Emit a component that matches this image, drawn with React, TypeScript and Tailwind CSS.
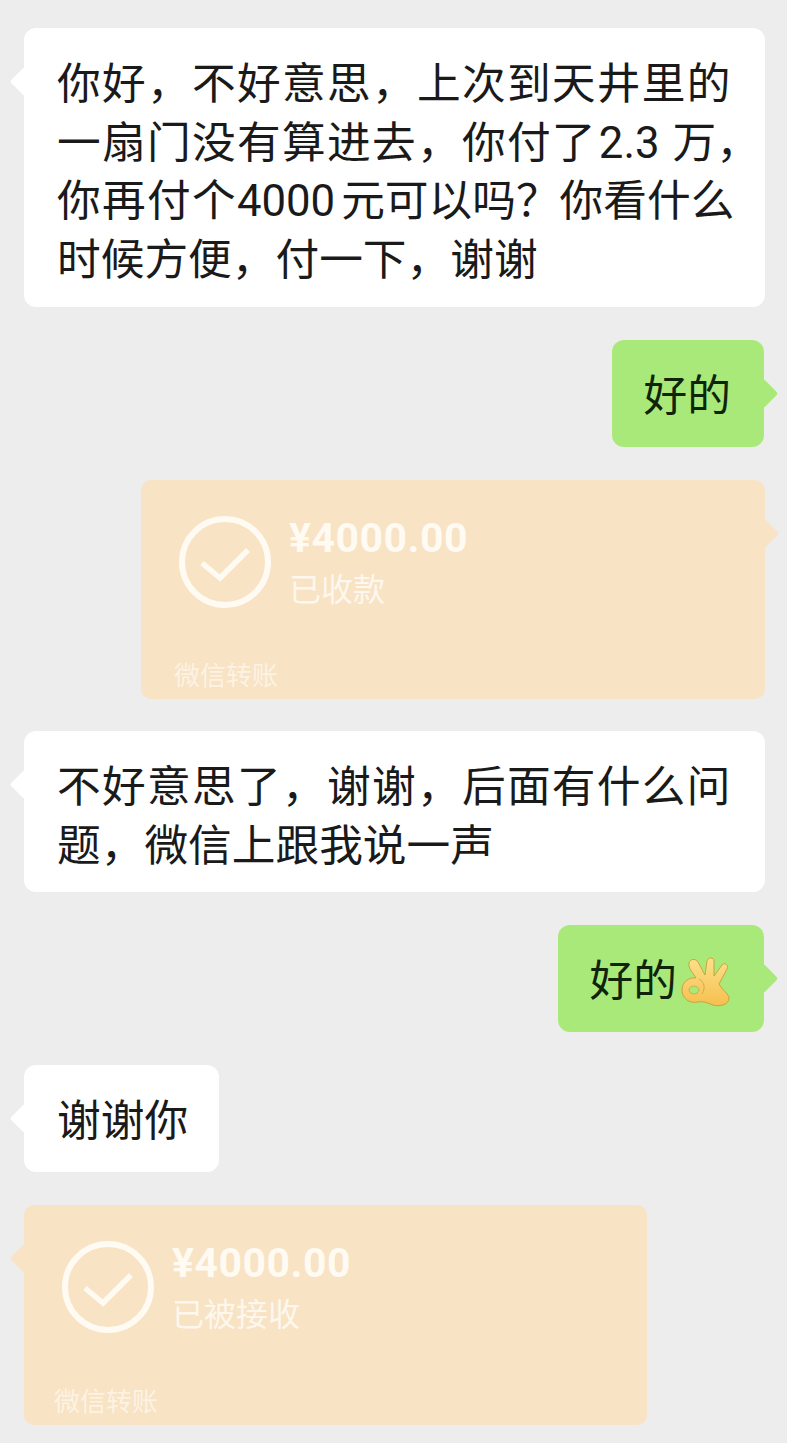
const FONT = "font-['Roboto','Noto_Sans_CJK_SC',sans-serif]";

function Incoming({ children, full }: { children: React.ReactNode; full?: boolean }) {
  return (
    <div
      className={`relative min-h-[107px] rounded-[12px] bg-white pb-[17px] pl-[33px] pr-[31px] pt-[27px] text-[43.7px] leading-[58.7px] text-[#1a1a1a] whitespace-pre ${
        full ? "self-stretch" : "w-fit self-start"
      }`}
    >
      <span className="absolute left-[-10px] top-[43px] h-[21px] w-[21px] rotate-45 rounded-[3px] bg-white" />
      {children}
    </div>
  );
}

function Line({ children, wide }: { children: React.ReactNode; wide?: boolean }) {
  return <div className={`relative ${wide ? "tracking-[1.3px]" : ""}`}>{children}</div>;
}

function Outgoing({ children }: { children: React.ReactNode }) {
  return (
    <div className="relative mr-[1px] flex h-[107px] items-center self-end rounded-[12px] bg-[#a9e97a] pl-[32px] pr-[33px] pt-[7px] text-[43.7px] text-[#10240a]">
      <span className="absolute right-[-10px] top-[43px] h-[21px] w-[21px] rotate-45 rounded-[3px] bg-[#a9e97a]" />
      <span className="relative flex items-center">{children}</span>
    </div>
  );
}

function Transfer({ label, left, className }: { label: string; left?: boolean; className: string }) {
  return (
    <div
      className={`relative flex flex-col justify-between rounded-[10px] bg-[#f8e3c5] pb-[5px] pl-[33px] pt-[36px] text-[#fffaf2] ${className}`}
    >
      <span
        className={`absolute top-[43px] h-[21px] w-[21px] rotate-45 rounded-[3px] bg-[#f8e3c5] ${
          left ? "left-[-10px]" : "right-[-10px]"
        }`}
      />
      <div className="relative ml-[5px] flex gap-[18px]">
        <svg width="92" height="92" viewBox="0 0 92 92" fill="none" stroke="#fffaf2" strokeWidth="6">
          <circle cx="46" cy="46" r="43" />
          <path d="M23 47 L41 62 L69 34" strokeWidth="5.5" />
        </svg>
        <div className="flex flex-col">
          <span className="text-[41px] font-bold leading-[44px] tracking-[0.5px]">¥4000.00</span>
          <span className="mt-[8px] text-[32px] leading-[44px] opacity-90">{label}</span>
        </div>
      </div>
      <span className={`relative text-[26px] leading-[36px] opacity-70 ${left ? "-ml-[3px]" : ""}`}>微信转账</span>
    </div>
  );
}

function OkHand() {
  return (
    <svg width="50" height="50" viewBox="0 0 50 50" className="ml-[4px]">
      <defs>
        <linearGradient id="hand" x1="0" y1="0" x2="0" y2="1">
          <stop offset="0" stopColor="#fde08c" />
          <stop offset="1" stopColor="#f6bf4f" />
        </linearGradient>
      </defs>
      <path
        d="M8 6 C9 2 14 1 17 5 L24 18 L26 4 C27 0 33 0 33 4 L33 19 L41 8 C44 5 48 8 46 12 L38 27 C41 33 48 37 48 41 C48 48 38 50 32 48 C27 46 22 44 17 45 C8 47 1 41 1 33 C1 25 8 20 15 21 C12 16 7 11 8 6 Z"
        fill="url(#hand)"
        stroke="#c8952f"
        strokeWidth="0.8"
      />
      <ellipse cx="13" cy="33" rx="5" ry="4" fill="#a9e97a" stroke="#c8952f" strokeWidth="0.6" />
      <path d="M18 22 C23 25 25 30 21 37" fill="none" stroke="#dca83f" strokeWidth="1" />
    </svg>
  );
}

export default function App() {
  return (
    <div className={`flex h-[1443px] w-[787px] flex-col gap-[33px] overflow-hidden bg-[#ededed] pl-[24px] pr-[22px] pt-[28px] ${FONT}`}>
      <Incoming full>
        <Line wide>你好，不好意思，上次到天井里的</Line>
        <Line>
          <span className="tracking-[1.3px]">一扇门没有算进去，你付了</span>
          <span className="ml-[2px] mr-[13px]">2.3</span>万，
        </Line>
        <Line>
          <span className="tracking-[1.3px]">你再付个</span>
          <span className="mr-[6px]">4000</span>元可以吗？你看什么
        </Line>
        <Line>时候方便，付一下，谢谢</Line>
      </Incoming>
      <Outgoing>好的</Outgoing>
      <Transfer label="已收款" className="-mb-[1px] h-[219px] w-[624px] self-end" />
      <Incoming full>
        <Line wide>不好意思了，谢谢，后面有什么问</Line>
        <Line>题，微信上跟我说一声</Line>
      </Incoming>
      <Outgoing>
        好的
        <OkHand />
      </Outgoing>
      <Incoming>
        <Line>谢谢你</Line>
      </Incoming>
      <Transfer label="已被接收" left className="h-[220px] w-[623px] self-start" />
    </div>
  );
}
